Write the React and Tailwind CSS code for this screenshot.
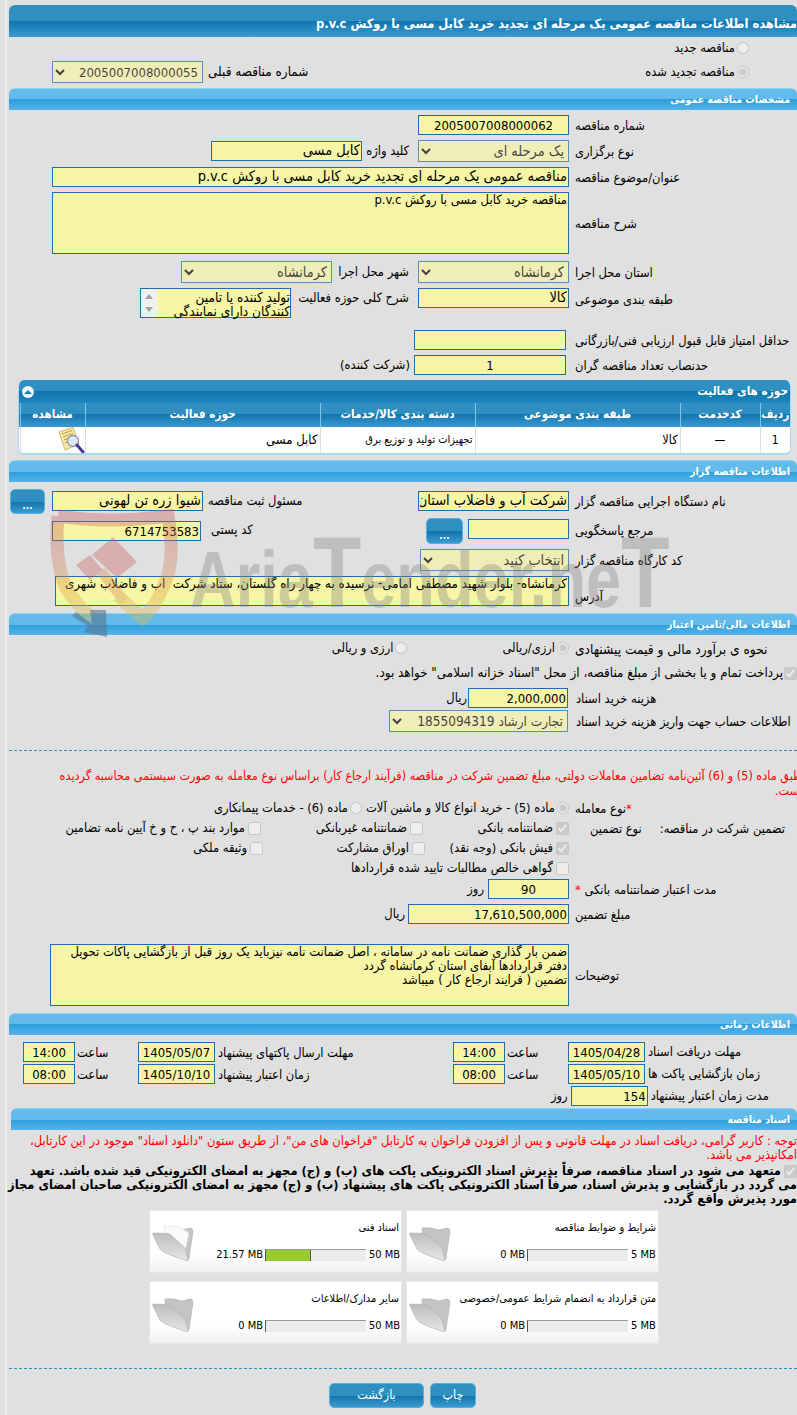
import React from "react";

const fontCls = "font-['DejaVu_Sans_Condensed','DejaVu_Sans',sans-serif]";
const fieldCls = "block shrink-0 border border-[#1d6fa5] bg-[#f7f5a6] text-black px-[1px] outline-none";

function Bar({ children, className = "" }) {
  return (
    <div dir="rtl" className={`h-[22px] rounded-t-[6px] border-t border-[#8fd4f5] bg-[linear-gradient(#62bbea_0%,#62bbea_50%,#2f9edb_50%,#55b3e8_100%)] pr-[7px] text-[10.5px] font-bold text-white leading-[21px] ${className}`}>
      {children}
    </div>
  );
}

function Tx({ value = "", w, h = "h-[20px]", center, num, className = "" }) {
  return <input dir="rtl" readOnly value={value} className={`${fieldCls} ${w} ${h} ${num ? "text-[13px]" : "text-[14.5px]"} ${center ? "text-center" : ""} ${className}`} />;
}

function Area({ value, w, h, size = "text-[12.9px]" }) {
  return <textarea dir="rtl" readOnly value={value} className={`${fieldCls} ${w} ${h} ${size} resize-none leading-[14px]`} />;
}

function Sel({ value, w, size = "text-[14.4px]" }) {
  return (
    <select dir="rtl" disabled className={`block shrink-0 h-[22px] ${w} border border-[#1d6fa5] bg-[#f7f5a6] ${size} opacity-70`}>
      <option>{value}</option>
    </select>
  );
}

function Lbl({ children, className = "", size = "text-[12.8px]" }) {
  return <span dir="rtl" className={`shrink-0 whitespace-nowrap ${size} ${className}`}>{children}</span>;
}

// left cell ends at the inputs' right edge (x=569), the label starts right after it
function Row({ label, mt, h, items = "items-center", children, labelCls = "pl-[6px]" }) {
  return (
    <div className={`grid grid-cols-[560px_228px] grid-rows-[minmax(0,1fr)] ${mt} ${h}`}>
      <div className={`flex justify-end ${items}`}>{children}</div>
      <div className={`flex pt-[2px] ${items} ${labelCls}`}>{label}</div>
    </div>
  );
}

function Radio({ checked, name }) {
  return <input type="radio" name={name} disabled defaultChecked={checked} className="m-0 block size-[12px] shrink-0" />;
}

function Check({ checked }) {
  return <input type="checkbox" disabled defaultChecked={checked} className="m-0 block size-[13px] shrink-0" />;
}

function CheckItem({ checked, w, children }) {
  return (
    <div className={`flex items-center gap-[3px] ${w}`}>
      <Check checked={checked} />
      <Lbl>{children}</Lbl>
    </div>
  );
}

function Button({ children, className = "" }) {
  return (
    <button className={`shrink-0 rounded-[5px] border border-[#4fb3e0] bg-[linear-gradient(#2f8fc0_0%,#2f8fc0_50%,#0f74ac_50%,#3b9bd1_100%)] text-white ${className}`}>
      {children}
    </button>
  );
}

function Folder({ papers }) {
  const id = papers ? "fa" : "fb";
  return (
    <svg width="42" height="37" viewBox="0 0 42 37" className="shrink-0">
      <defs>
        <linearGradient id={id} x1="0" y1="0" x2="0" y2="1">
          <stop offset="0" stopColor="#bdbdbd" />
          <stop offset="1" stopColor="#e6e6e6" />
        </linearGradient>
      </defs>
      <path d="M13 3 Q22 2 30 5 L38 3 Q41 3 41 7 L37 33 Q36.5 36 35 35 L14 20 Z" fill="#c4c4c4" stroke="#b0b0b0" strokeWidth="0.6" />
      {papers && <path d="M12 1 L28 2 L37 8 L33 26 L14 18 Z" fill="#fafafa" stroke="#dddddd" strokeWidth="0.6" />}
      <path d="M0.5 9 Q0.5 8 2 8 L16 8.5 Q18 9 20 11 L33 23 L36 35 Q36 36 34 35.5 L21 31 Q10 27 8 24 Z" fill={`url(#${id})`} stroke="#adadad" strokeWidth="0.6" />
    </svg>
  );
}

function FileCard({ title, min, max, fill, papers }) {
  return (
    <div className="flex h-[63px] border border-[#e6e6e6] bg-[linear-gradient(#ffffff_0%,#ffffff_70%,#f0f0f0_100%)] pl-[2px] pt-[14px]">
      <Folder papers={papers} />
      <div className="flex-1 -mt-[14px]">
        <div dir="rtl" className="pr-[2px] pt-[10px] text-[11px] leading-[14px] whitespace-nowrap">{title}</div>
        <div className="mt-[12px] flex items-center justify-end whitespace-nowrap pr-[4px] text-[11px]">
          <span>{min}</span>
          <div className="ml-[2px] h-[12px] w-[101px] border-t border-l border-t-[#999999] border-l-[#555555] bg-[#ececec]">
            {fill && <div className="h-full w-[45px] border-r border-[#555555] bg-[#9acb2e]"></div>}
          </div>
          <span className={`ml-[3px] ${max === "5 MB" ? "w-[23px]" : "w-[28px]"}`}>{max}</span>
        </div>
      </div>
    </div>
  );
}

function DocIcon() {
  return (
    <svg width="28" height="26" viewBox="0 0 28 26" className="block">
      <path d="M2 5 L16 0.5 L22 17 L8 23 Z" fill="#f8e9a0" stroke="#cdb66a" strokeWidth="1" />
      <path d="M5 7 L15 3.5 M6 10 L16 6.5 M7 13 L12 11 M8 16 L12 14.5" stroke="#b89f55" strokeWidth="1" />
      <circle cx="16" cy="14" r="5.5" fill="#dfe9f2" stroke="#8b93a8" strokeWidth="1.3" />
      <path d="M20 18 L26 25" stroke="#4a3a8c" strokeWidth="3" strokeLinecap="round" />
    </svg>
  );
}

// Scroll box of the activity description: the arrows sit on the left in RTL
function ScrollBox() {
  return (
    <div className="flex h-[30px] w-[151px] shrink-0 border border-[#1d6fa5] bg-[#f7f5a6]">
      <div className="flex w-[16px] flex-col items-center justify-between bg-[#f1f1f1] py-[5px]">
        <span className="border-x-[4px] border-b-[5px] border-x-transparent border-b-[#a3a3a3]"></span>
        <span className="border-x-[4px] border-t-[5px] border-x-transparent border-t-[#a3a3a3]"></span>
      </div>
      <div dir="rtl" className="flex-1 whitespace-nowrap pt-[1px] text-[13.5px] leading-[14px]">
        تولید کننده یا تامین
        <br />
        کنندگان دارای نمایندگی
      </div>
    </div>
  );
}

function Watermark() {
  return (
    <div className="pointer-events-none absolute left-0 top-[490px] h-[160px] w-[797px]">
      <svg width="200" height="160" viewBox="0 0 200 160" className="absolute left-0 top-0">
        <defs>
          <linearGradient id="wm" x1="0" y1="0" x2="0" y2="1">
            <stop offset="0" stopColor="#c85a5a" />
            <stop offset="0.45" stopColor="#cf7a5a" />
            <stop offset="0.75" stopColor="#e0a040" />
            <stop offset="1" stopColor="#e6c040" />
          </linearGradient>
        </defs>
        <g opacity="0.36">
          <path d="M58 26 Q110 34 168 26 Q176 70 164 95 Q155 118 143 128 Q130 118 118 106 M58 26 Q54 70 66 98 Q74 112 92 128" fill="none" stroke="url(#wm)" strokeWidth="13" />
          <path d="M92 65 L113 47 L137 72 L117 88 Z" fill="#c85a5a" />
          <path d="M76 75 L90 65 L103 80 L90 90 Z" fill="#c85a5a" />
          <path d="M97 84 L105 78 L128 108 L120 114 Z" fill="#d88a50" />
        </g>
        <path d="M76 122 L92 134 L90 120 L106 120 L107 147 L84 142 L88 136 L72 126 Z" fill="#5a7590" opacity="0.6" />
      </svg>
      <div className="absolute left-[190px] top-[32px] flex items-baseline whitespace-nowrap font-['Liberation_Sans',sans-serif] font-bold leading-none text-[#7f7f7f]/35 text-[80px] origin-left scale-x-[0.79]">
        <span>Aria</span>
        <span className="text-[100px]">T</span>
        <span>ender.ne</span>
        <span className="text-[100px]">T</span>
      </div>
    </div>
  );
}

const activityCols = ["w-[3px]", "w-[65px]", "w-[235px]", "w-[155px]", "w-[205px]", "w-[80px]", "w-[30px]"];

export default function App() {
  return (
    <div className={`relative h-[1415px] w-[797px] overflow-hidden bg-[#e0e0e0] text-black ${fontCls}`}>
      <div className="ml-[5px] h-full border-l-2 border-[#eeeeee] pl-[2px] pt-[5px]">
        <div dir="rtl" className="h-[32px] rounded-t-[6px] bg-[linear-gradient(#2f8fc0_0%,#2f8fc0_50%,#0f74ac_50%,#3b9bd1_100%)] pt-[9px] text-[12.8px] font-bold text-white whitespace-nowrap">
          مشاهده اطلاعات مناقصه عمومی یک مرحله ای تجدید خرید کابل مسی با روکش p.v.c
        </div>

        <div dir="rtl" className="mt-[3px] flex h-[16px] items-center gap-[2px] pr-[48px]">
          <Radio name="kind" />
          <Lbl>مناقصه جدید</Lbl>
        </div>
        <div className="mt-[5px] flex h-[22px] items-center pl-[43px]">
          <Sel value="2005007008000055" w="w-[151px]" size="text-[13px]" />
          <Lbl className="ml-[5px]" size="text-[13.4px]">شماره مناقصه قبلی</Lbl>
          <div dir="rtl" className="ml-auto flex items-center gap-[2px] pr-[48px]">
            <Radio name="kind" checked />
            <Lbl>مناقصه تجدید شده</Lbl>
          </div>
        </div>

        <Bar className="mt-[5px]">مشخصات مناقصه عمومی</Bar>
        <Row mt="mt-[5px]" h="h-[20px]" label={<Lbl>شماره مناقصه</Lbl>}>
          <Tx value="2005007008000062" w="w-[151px]" center num />
        </Row>
        <Row mt="mt-[5px]" h="h-[22px]" label={<Lbl>نوع برگزاری</Lbl>}>
          <Tx value="کابل مسی" w="w-[151px]" />
          <Lbl className="ml-[6px] mr-[9px] w-[41px]">کلید واژه</Lbl>
          <Sel value="یک مرحله ای" w="w-[151px]" />
        </Row>
        <Row mt="mt-[5px]" h="h-[20px]" label={<Lbl>عنوان/موضوع مناقصه</Lbl>}>
          <Tx value="مناقصه عمومی یک مرحله ای تجدید خرید کابل مسی با روکش p.v.c" w="w-[517px]" />
        </Row>
        <Row mt="mt-[5px]" h="h-[62px]" label={<Lbl>شرح مناقصه</Lbl>}>
          <Area value="مناقصه خرید کابل مسی با روکش p.v.c" w="w-[517px]" h="h-[62px]" />
        </Row>
        <Row mt="mt-[7px]" h="h-[22px]" label={<Lbl>استان محل اجرا</Lbl>}>
          <Sel value="کرمانشاه" w="w-[151px]" />
          <Lbl className="ml-[5px] mr-[9px] w-[72px]">شهر محل اجرا</Lbl>
          <Sel value="کرمانشاه" w="w-[151px]" />
        </Row>
        <Row mt="mt-[5px]" h="h-[30px]" items="items-start" label={<Lbl>طبقه بندی موضوعی</Lbl>}>
          <ScrollBox />
          <Lbl className="ml-[4px] mr-[9px] w-[114px]">شرح کلی حوزه فعالیت</Lbl>
          <Tx value="کالا" w="w-[151px]" />
        </Row>
        <Row mt="mt-[12px]" h="h-[20px]" label={<Lbl>حداقل امتیاز قابل قبول ارزیابی فنی/بازرگانی</Lbl>}>
          <Tx w="w-[152px]" className="mr-[3px]" />
        </Row>
        <Row mt="mt-[5px]" h="h-[20px]" label={<Lbl>حدنصاب تعداد مناقصه گران</Lbl>}>
          <Lbl className="mr-[4px]">(شرکت کننده)</Lbl>
          <Tx value="1" w="w-[152px]" className="mr-[3px]" center num />
        </Row>

        <div dir="rtl" className="ml-[9px] mt-[5px] w-[773px] overflow-hidden rounded-[6px] border-b-2 border-x border-[#a9d8f0] bg-white">
          <div className="flex h-[23px] items-center justify-between bg-[linear-gradient(#2f8fc0_0%,#2f8fc0_50%,#0f74ac_50%,#1e86bd_100%)] pr-[2px] pl-[3px] text-[11.7px] font-bold text-white">
            <span>حوزه های فعالیت</span>
            <span className="flex size-[12px] items-center justify-center rounded-full bg-[#eef6fb]">
              <span className="border-x-[4px] border-b-[4px] border-x-transparent border-b-[#1b7fb5]"></span>
            </span>
          </div>
          <table className="w-full table-fixed border-collapse">
            <colgroup>
              {[...activityCols].reverse().map((c, i) => <col key={i} className={c} />)}
            </colgroup>
            <thead>
              <tr className="h-[24px] bg-[linear-gradient(#2f8fc0_0%,#2f8fc0_45%,#0f74ac_45%,#3b9bd1_100%)] text-[11.7px] font-bold text-white">
                {["ردیف", "کدخدمت", "طبقه بندی موضوعی", "دسته بندی کالا/خدمات", "حوزه فعالیت", "مشاهده"].map((t) => (
                  <th key={t} className="border-l border-[#7cc6ea] p-0 text-center font-bold">{t}</th>
                ))}
                <th className="p-0"></th>
              </tr>
            </thead>
            <tbody>
              <tr className="h-[26px] text-[12px]">
                <td className="border-l border-[#dddddd] p-0 text-center">1</td>
                <td className="border-l border-[#dddddd] p-0 text-center">—</td>
                <td className="border-l border-[#dddddd] p-0 pr-[2px] text-[12.5px]">کالا</td>
                <td className="border-l border-[#dddddd] p-0 pr-[2px] text-[11px]">تجهیزات تولید و توزیع برق</td>
                <td className="border-l border-[#dddddd] p-0 pr-[2px] text-[13px]">کابل مسی</td>
                <td className="border-l border-[#dddddd] p-0"><DocIcon /></td>
                <td className="p-0"></td>
              </tr>
            </tbody>
          </table>
        </div>

        <Bar className="mt-[5px]">اطلاعات مناقصه گزار</Bar>
        <Row mt="mt-[9px]" h="h-[20px]" label={<Lbl>نام دستگاه اجرایی مناقصه گزار</Lbl>}>
          <Button className="ml-[1px] h-[25px] w-[35px] pt-[8px] text-[10px] font-bold">...</Button>
          <Tx value="شیوا زره تن لهونی" w="w-[151px]" className="ml-[7px]" />
          <Lbl className="ml-[5px]">مسئول ثبت مناقصه</Lbl>
          <Tx value="شرکت آب و فاضلاب استان" w="w-[151px]" className="ml-auto" />
        </Row>
        <Row mt="mt-[8px]" h="h-[20px]" items="items-start" label={<Lbl>مرجع پاسخگویی</Lbl>}>
          <Tx value="6714753583" w="w-[149px]" className="ml-[43px] mt-[2px]" num />
          <Lbl className="ml-[10px] mt-[1px]">کد پستی</Lbl>
          <Button className="ml-auto -mt-[1px] h-[26px] w-[37px] pt-[8px] text-[10px] font-bold">...</Button>
          <Tx w="w-[101px]" className="ml-[5px]" />
        </Row>
        <Row mt="mt-[10px]" h="h-[22px]" label={<Lbl>کد کارگاه مناقصه گزار</Lbl>}>
          <Sel value="انتخاب کنید" w="w-[149px]" />
        </Row>
        <Row mt="mt-[5px]" h="h-[30px]" items="items-end" label={<Lbl>آدرس</Lbl>}>
          <Area value="کرمانشاه- بلوار شهید مصطفی امامی- نرسیده به چهار راه گلستان، ستاد شرکت  آب و فاضلاب شهری" w="w-[514px]" h="h-[30px]" size="text-[13.2px]" />
        </Row>

        <Bar className="mt-[7px]">اطلاعات مالی/تامین اعتبار</Bar>
        <Row mt="mt-[5px]" h="h-[16px]" label={<Lbl size="text-[13.6px]">نحوه ی برآورد مالی و قیمت پیشنهادی</Lbl>}>
          <div dir="rtl" className="flex w-[237px] items-center gap-[2px]">
            <Radio name="cur" checked />
            <Lbl>ارزی/ریالی</Lbl>
            <div className="mr-[93px] flex items-center gap-[2px]">
              <Radio name="cur" />
              <Lbl>ارزی و ریالی</Lbl>
            </div>
          </div>
        </Row>
        <div dir="rtl" className="mt-[9px] flex h-[16px] items-center gap-[1px]">
          <Check checked />
          <Lbl size="text-[13.3px]">پرداخت تمام و یا بخشی از مبلغ مناقصه، از محل "اسناد خزانه اسلامی" خواهد بود.</Lbl>
        </div>
        <Row mt="mt-[7px]" h="h-[20px]" label={<Lbl>هزینه خرید اسناد</Lbl>} labelCls="pl-[7px]">
          <Lbl className="mr-[1px]">ریال</Lbl>
          <Tx value="2,000,000" w="w-[100px]" className="mr-[1px]" num />
        </Row>
        <Row mt="mt-[2px]" h="h-[22px]" label={<Lbl>اطلاعات حساب جهت واریز هزینه خرید اسناد</Lbl>} labelCls="pl-[7px]">
          <div className="mr-[1px]"><Sel value="تجارت ارشاد 1855094319" w="w-[179px]" size="text-[13.5px]" /></div>
        </Row>

        <div className="mt-[18px] border-t border-dashed border-[#2f8fc0]"></div>

        <div dir="rtl" className="mt-[17px] w-[793px] whitespace-nowrap text-[12.5px] leading-[15px] text-[#ff0000]">
          طبق ماده (5) و (6) آئین‌نامه تضامین معاملات دولتی، مبلغ تضمین شرکت در مناقصه (فرآیند ارجاع کار) براساس نوع معامله به صورت سیستمی محاسبه گردیده
          <br />
          است.
        </div>

        <Row mt="mt-[2px]" h="h-[16px]" label={<Lbl><span className="text-[#ff0000]">*</span>نوع معامله</Lbl>}>
          <div dir="rtl" className="flex w-[362px] items-center gap-[2px]">
            <Radio name="deal" checked />
            <Lbl>ماده (5) - خرید انواع کالا و ماشین آلات</Lbl>
            <div className="mr-[2px] flex items-center gap-[2px]">
              <Radio name="deal" />
              <Lbl>ماده (6) - خدمات پیمانکاری</Lbl>
            </div>
          </div>
        </Row>
        <Row mt="mt-[4px]" h="h-[16px]" label={<div dir="rtl" className="flex w-[210px] items-center justify-between pl-[15px]"><Lbl>تضمین شرکت در مناقصه:</Lbl><Lbl>نوع تضمین</Lbl></div>}>
          <div dir="rtl" className="flex w-[505px]">
            <CheckItem checked w="w-[146px]">ضمانتنامه بانکی</CheckItem>
            <CheckItem w="w-[162px]">ضمانتنامه غیربانکی</CheckItem>
            <CheckItem>موارد بند پ ، ح و خ آیین نامه تضامین</CheckItem>
          </div>
        </Row>
        <Row mt="mt-[4px]" h="h-[16px]">
          <div dir="rtl" className="flex w-[505px]">
            <CheckItem checked w="w-[144px]">فیش بانکی (وجه نقد)</CheckItem>
            <CheckItem w="w-[162px]">اوراق مشارکت</CheckItem>
            <CheckItem>وثیقه ملکی</CheckItem>
          </div>
        </Row>
        <Row mt="mt-[4px]" h="h-[16px]">
          <div dir="rtl" className="w-[505px]">
            <CheckItem>گواهی خالص مطالبات تایید شده قراردادها</CheckItem>
          </div>
        </Row>
        <Row mt="mt-[3px]" h="h-[20px]" label={<Lbl>مدت اعتبار ضمانتنامه بانکی <span className="text-[#ff0000]">*</span></Lbl>}>
          <Lbl className="mr-[4px]">روز</Lbl>
          <Tx value="90" w="w-[81px]" center num />
        </Row>
        <Row mt="mt-[5px]" h="h-[20px]" label={<Lbl>مبلغ تضمین</Lbl>}>
          <Lbl className="mr-[3px]">ریال</Lbl>
          <Tx value="17,610,500,000" w="w-[161px]" num />
        </Row>
        <Row mt="mt-[20px]" h="h-[62px]" label={<Lbl>توضیحات</Lbl>}>
          <Area
            value={"ضمن بار گذاری ضمانت نامه در سامانه ، اصل ضمانت نامه نیزباید یک روز قبل از بازگشایی پاکات تحویل\nدفتر قراردادها آبفای استان کرمانشاه گردد\nتضمین ( فرایند ارجاع کار ) میباشد"}
            w="w-[519px]"
            h="h-[62px]"
          />
        </Row>

        <Bar className="mt-[7px]">اطلاعات زمانی</Bar>
        {[
          ["14:00", "1405/05/07", "مهلت ارسال پاکتهای پیشنهاد", "14:00", "1405/04/28", "مهلت دریافت اسناد", "mt-[7px]"],
          ["08:00", "1405/10/10", "زمان اعتبار پیشنهاد", "08:00", "1405/05/10", "زمان بازگشایی پاکت ها", "mt-[2px]"],
        ].map((r) => (
          <div key={r[5]} className={`flex h-[20px] items-center pl-[14px] ${r[6]}`}>
            <Tx value={r[0]} w="w-[52px]" center num />
            <div className="ml-[2px] w-[61px]"><Lbl>ساعت</Lbl></div>
            <Tx value={r[1]} w="w-[77px]" center num />
            <div className="ml-[3px] w-[235px]"><Lbl>{r[2]}</Lbl></div>
            <Tx value={r[3]} w="w-[52px]" center num />
            <div className="ml-[2px] w-[61px]"><Lbl>ساعت</Lbl></div>
            <Tx value={r[4]} w="w-[77px]" center num />
            <Lbl className="ml-[3px]">{r[5]}</Lbl>
          </div>
        ))}
        <div className="mt-[2px] flex h-[20px] items-center pl-[542px]">
          <Lbl className="mr-[3px]">روز</Lbl>
          <Tx value="154" w="w-[77px]" num />
          <Lbl className="ml-[3px]">مدت زمان اعتبار پیشنهاد</Lbl>
        </div>

        <Bar className="ml-[2px] mt-[2px]">اسناد مناقصه</Bar>
        <div dir="rtl" className="mt-[4px] whitespace-nowrap text-[12.8px] leading-[14px] text-[#ff0000]">
          توجه : کاربر گرامی، دریافت اسناد در مهلت قانونی و پس از افزودن فراخوان به کارتابل "فراخوان های من"، از طریق ستون "دانلود اسناد" موجود در این کارتابل،
          <br />
          امکانپذیر می باشد.
        </div>
        <div dir="rtl" className="mt-[2px] whitespace-nowrap text-[12.8px] font-bold leading-[14px]">
          <input type="checkbox" disabled defaultChecked className="m-0 ml-[3px] inline-block size-[13px] align-middle" />
          متعهد می شود در اسناد مناقصه، صرفاً پذیرش اسناد الکترونیکی پاکت های (ب) و (ج) مجهز به امضای الکترونیکی قید شده باشد. تعهد
          <br />
          می گردد در بازگشایی و پذیرش اسناد، صرفاً اسناد الکترونیکی پاکت های پیشنهاد (ب) و (ج) مجهز به امضای الکترونیکی صاحبان امضای مجاز
          <br />
          مورد پذیرش واقع گردد.
        </div>

        <div className="ml-[140px] mt-[4px] grid w-[510px] grid-cols-2 gap-x-[4px] gap-y-[8px]">
          <FileCard title="اسناد فنی" min="21.57 MB" max="50 MB" fill papers />
          <FileCard title="شرایط و ضوابط مناقصه" min="0 MB" max="5 MB" />
          <FileCard title="سایر مدارک/اطلاعات" min="0 MB" max="50 MB" />
          <FileCard title="متن قرارداد به انضمام شرایط عمومی/خصوصی" min="0 MB" max="5 MB" />
        </div>

        <div className="mt-[24px] border-t border-dashed border-[#2f8fc0]"></div>

        <div className="ml-[320px] mt-[14px] flex gap-[6px]">
          <Button className="h-[25px] w-[95px] text-[12.5px]">بازگشت</Button>
          <Button className="h-[25px] w-[46px] text-[12.5px]">چاپ</Button>
        </div>
      </div>
      <Watermark />
    </div>
  );
}
